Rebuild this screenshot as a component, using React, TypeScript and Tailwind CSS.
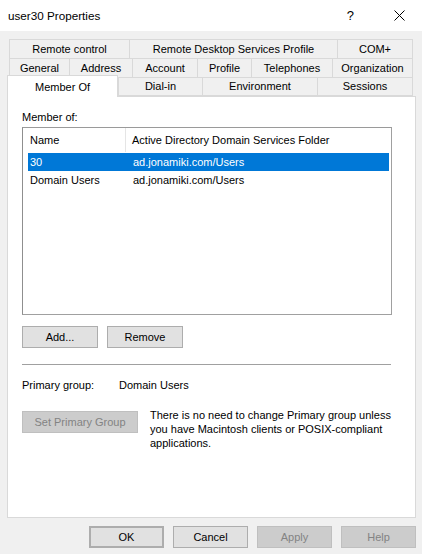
import React from "react";

type Tab = { label: string; w: string };

const row1: Tab[] = [
  { label: "Remote control", w: "w-[120px]" },
  { label: "Remote Desktop Services Profile", w: "w-[208px]" },
  { label: "COM+", w: "w-[76px]" },
];

const row2: Tab[] = [
  { label: "General", w: "w-[60px]" },
  { label: "Address", w: "w-[63px]" },
  { label: "Account", w: "w-[65px]" },
  { label: "Profile", w: "w-[54px]" },
  { label: "Telephones", w: "w-[81px]" },
  { label: "Organization", w: "w-[81px]" },
];

const row3: Tab[] = [
  { label: "Dial-in", w: "w-[84px]" },
  { label: "Environment", w: "w-[115px]" },
  { label: "Sessions", w: "w-[96px]" },
];

const groups = [
  { name: "30", folder: "ad.jonamiki.com/Users", selected: true },
  { name: "Domain Users", folder: "ad.jonamiki.com/Users", selected: false },
];

const TabRow = ({ tabs, h }: { tabs: Tab[]; h: string }) => (
  <div className={`flex ${h}`}>
    {tabs.map((t) => (
      <div
        key={t.label}
        className={`${t.w} flex items-center justify-center border border-r-0 last:border-r border-[#d9d9d9] bg-[#f0f0f0] leading-none`}
      >
        {t.label}
      </div>
    ))}
  </div>
);

const Button = ({
  children,
  className = "",
}: {
  children: React.ReactNode;
  className?: string;
}) => (
  <button
    className={`h-[22px] flex items-center justify-center border border-[#adadad] bg-[#e1e1e1] text-black ${className}`}
  >
    {children}
  </button>
);

export default function App() {
  return (
    <div
      className="w-[422px] h-[554px] bg-[#f0f0f0] text-[11px] text-black overflow-hidden"
      style={{ fontFamily: '"Liberation Sans", Arial, sans-serif' }}
    >
      {/* title bar */}
      <div className="h-[31px] bg-white flex items-center pl-[8px]">
        <span className="text-[11.7px]">user30 Properties</span>
        <span className="ml-auto mr-[40px] text-[13px]">?</span>
        <svg width="11" height="11" viewBox="0 0 11 11" className="mr-[17px]">
          <path d="M0.5 0.5 L10.5 10.5 M10.5 0.5 L0.5 10.5" stroke="#000" strokeWidth="1" />
        </svg>
      </div>

      {/* tabs */}
      <div className="pt-[8px] pl-[9px]">
        <TabRow tabs={row1} h="h-[20px]" />
        <div className="-mt-px">
          <TabRow tabs={row2} h="h-[20px]" />
        </div>
        <div className="-mt-px flex">
          <div className="relative z-10 -ml-[2px] -mt-[2px] w-[111px] h-[22px] bg-white border border-b-0 border-[#d9d9d9] flex justify-center pt-[6px] leading-none">
            Member Of
          </div>
          <TabRow tabs={row3} h="h-[19px]" />
        </div>
      </div>

      {/* panel */}
      <div className="ml-[7px] -mt-px w-[409px] h-[422px] bg-white border border-[#d9d9d9] pl-[14px] pt-[13px]">
        <div className="leading-[14px]">Member of:</div>

        <div className="mt-[3px] w-[370px] h-[188px] border border-[#a0a0a0] border-l-[#8f8f8f] border-t-[#9a9a9a]">
          <div className="flex h-[24px] items-center">
            <div className="w-[103px] h-full flex items-center pl-[7px] border-r border-[#e5e5e5]">
              Name
            </div>
            <div className="pl-[6px]">Active Directory Domain Services Folder</div>
          </div>
          <div className="pl-[5px] pr-[2px] pt-px">
            {groups.map((g) => (
              <div
                key={g.name}
                className={`flex h-[18px] items-center ${
                  g.selected ? "bg-[#0078d7] text-white" : ""
                }`}
              >
                <div className="w-[105px] pl-[2px]">{g.name}</div>
                <div>{g.folder}</div>
              </div>
            ))}
          </div>
        </div>

        <div className="mt-[11px] flex gap-[9px]">
          <Button className="w-[76px]">Add...</Button>
          <Button className="w-[76px]">Remove</Button>
        </div>

        <div className="mt-[16px] w-[369px] h-px bg-[#a0a0a0]" />

        <div className="mt-[13px] flex leading-[14px]">
          <div className="w-[97px]">Primary group:</div>
          <div>Domain Users</div>
        </div>

        <div className="mt-[19px] flex">
          <button className="w-[116px] h-[22px] flex items-center justify-center border border-[#bfbfbf] bg-[#cccccc] text-[#838383]">
            Set Primary Group
          </button>
          <p className="ml-[12px] -mt-[3px] leading-[14px]">
            There is no need to change Primary group unless
            <br />
            you have Macintosh clients or POSIX-compliant
            <br />
            applications.
          </p>
        </div>
      </div>

      {/* dialog buttons */}
      <div className="mt-[8px] flex justify-end gap-[9px] pr-[6px]">
        <Button className="w-[75px] border-2 border-[#0078d7]">OK</Button>
        <Button className="w-[75px]">Cancel</Button>
        <button className="w-[75px] h-[22px] flex items-center justify-center border border-[#bfbfbf] bg-[#cccccc] text-[#838383]">
          Apply
        </button>
        <button className="w-[75px] h-[22px] flex items-center justify-center border border-[#bfbfbf] bg-[#cccccc] text-[#838383]">
          Help
        </button>
      </div>
    </div>
  );
}
